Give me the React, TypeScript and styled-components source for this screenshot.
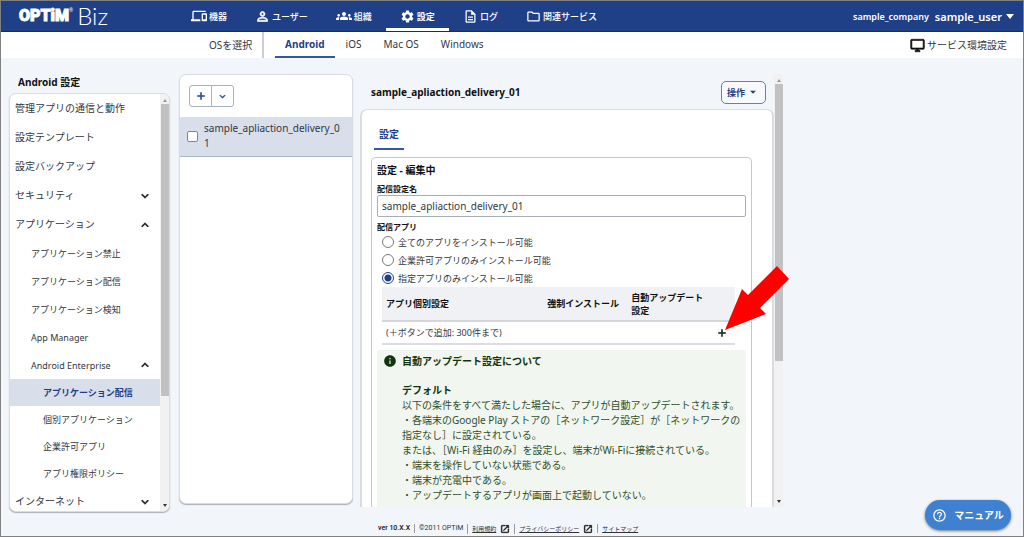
import React from "react";
import styled, { createGlobalStyle, css } from "styled-components";
import {
  MdAdd,
  MdArrowDropDown,
  MdDevices,
  MdExpandLess,
  MdExpandMore,
  MdGroups,
  MdHelpOutline,
  MdInfo,
  MdOpenInNew,
  MdOutlineDescription,
  MdOutlineDesktopWindows,
  MdOutlineFolder,
  MdPersonOutline,
  MdSettings,
} from "react-icons/md";

const navy = "#1f3f87";
const selected = "#d8deea";
const line = "#c3c7d1";

const GlobalStyle = createGlobalStyle`
  * { box-sizing: border-box; }
  body { margin: 0; }
  body, button, input {
    font-family: "Noto Sans", "Noto Sans CJK JP", sans-serif;
    font-size: 10px;
    line-height: 15px;
    color: #33373f;
  }
  button { padding: 0; cursor: pointer; }
  a { color: inherit; text-decoration: none; }
  h1, h2, h3, p, ul, fieldset, legend { margin: 0; padding: 0; border: 0; }
  ul { list-style: none; }
  svg { display: block; flex: none; }
  path[fill="none"] { stroke: none; }
`;

const Page = styled.div`
  position: relative;
  display: flex;
  flex-direction: column;
  height: 100vh;
  min-height: 500px;
  border: 1px solid #808080;
  background: #f2f5f9;
`;

const Header = styled.header`
  display: flex;
  flex: none;
  height: 31px;
  padding: 0 9px 0 18px;
  background: ${navy};
  border-bottom: 1px solid #0d2c75;
  color: #fff;
`;

const Logo = styled.a`
  display: flex;
  align-items: center;
  width: 158px;
`;

const Brand = styled.span`
  font: 900 16px/30px Roboto, "Liberation Sans", sans-serif;
  -webkit-text-stroke: 1px #fff;
`;

const Mark = styled.sup`
  align-self: flex-start;
  font-size: 5px;
  line-height: 18px;
`;

const Product = styled.span`
  margin-left: 4px;
  font: 300 24px/30px Lato, sans-serif;
`;

const MainNav = styled.nav`
  display: flex;
  flex: 1;
`;

const NavLink = styled.a<{ $active?: boolean }>`
  display: flex;
  align-items: center;
  gap: 2px;
  padding: 3px 14px 0;
  border-bottom: 3px solid ${(p) => (p.$active ? "#fff" : "transparent")};
  font-size: 9px;
  font-weight: ${(p) => (p.$active ? 700 : 500)};
  white-space: nowrap;
`;

const Account = styled.button`
  display: flex;
  align-items: center;
  gap: 6px;
  border: 0;
  background: none;
  color: #fff;
  font-size: 9px;
  font-weight: 600;
`;

const UserName = styled.span`
  display: flex;
  align-items: center;
  gap: 4px;
  font-size: 11px;
`;

const SubNav = styled.nav`
  display: flex;
  flex: none;
  height: 26px;
  padding: 0 16px 0 208px;
  background: #fff;
`;

const OsLabel = styled.span`
  display: flex;
  align-items: center;
  width: 55px;
  margin-right: 11px;
  border-right: 2px solid #cbced6;
  white-space: nowrap;
`;

const OsTab = styled.a<{ $active?: boolean }>`
  display: flex;
  align-items: center;
  padding: 0 11px;
  border-bottom: 2px solid transparent;
  white-space: nowrap;
  ${(p) =>
    p.$active &&
    css`
      padding: 0 10px;
      border-color: #3557a0;
      color: ${navy};
      font-weight: 700;
    `}
`;

const Environment = styled.a`
  display: flex;
  align-items: center;
  gap: 2px;
  margin-left: auto;
  svg { color: #111; stroke-width: 1px; }
`;

const Workspace = styled.main`
  display: grid;
  grid-template-columns: 161px 176px minmax(0, 5fr) minmax(0, 3fr);
  flex: 1;
  min-height: 0;
  padding-left: 8px;
`;

const Sidebar = styled.aside`
  display: flex;
  flex-direction: column;
  min-height: 0;
  padding-top: 16px;
`;

const SidebarTitle = styled.h2`
  flex: none;
  height: 19px;
  padding-left: 9px;
  color: #111;
  font-size: 10px;
  line-height: 17px;
`;

const SidebarCard = styled.nav`
  display: flex;
  flex: 1;
  min-height: 0;
  overflow: hidden;
  margin-bottom: -5px;
  border: 1px solid #d8dce3;
  border-radius: 7px;
  background: #fff;
  box-shadow: 0 1px 1px #a9adb5;
`;

const MenuList = styled.ul`
  flex: 1;
  overflow: hidden;
`;

const MenuLink = styled.a<{ $level: number; $active?: boolean }>`
  display: flex;
  align-items: center;
  justify-content: space-between;
  height: ${(p) => [29, 28, 27][p.$level]}px;
  padding: 0 8px 0 ${(p) => [5, 21, 33][p.$level]}px;
  font-size: ${(p) => (p.$level === 0 ? 10 : 9)}px;
  white-space: nowrap;
  svg { color: #111; stroke-width: 1px; }
  ${(p) =>
    p.$active &&
    css`
      background: ${selected};
      color: ${navy};
      font-weight: 700;
    `}
`;

const Track = styled.div`
  display: flex;
  flex-direction: column;
  align-items: center;
  flex: none;
  width: 9px;
  background: #f1f1f1;
`;

const Thumb = styled.div<{ $size: string }>`
  width: 8px;
  height: ${(p) => p.$size};
  background: #c1c1c1;
`;

const ArrowEnd = styled.span<{ $down?: boolean }>`
  width: 0;
  margin: ${(p) => (p.$down ? "auto 0 4px" : "5px 0 2px")};
  border: 2px solid transparent;
  ${(p) =>
    p.$down
      ? "border-top: 3px solid #333; border-bottom: 0;"
      : "border-bottom: 3px solid #999; border-top: 0;"}
`;

const ListCard = styled.section`
  margin: 16px -7px 3px 9px;
  border: 1px solid #d8dce3;
  border-radius: 7px;
  background: #fff;
  box-shadow: 0 1px 1px #a9adb5;
`;

const Toolbar = styled.div`
  display: flex;
  height: 42px;
  padding: 10px 9px;
`;

const ToolButton = styled.button<{ $side: "left" | "right" }>`
  display: flex;
  align-items: center;
  justify-content: center;
  width: 23px;
  height: 22px;
  border: 1px solid #a9b0be;
  border-radius: ${(p) => (p.$side === "left" ? "3px 0 0 3px" : "0 3px 3px 0")};
  margin-left: ${(p) => (p.$side === "left" ? 0 : -1)}px;
  background: #fff;
  color: ${navy};
  svg { stroke-width: 1px; }
`;

const ListRow = styled.label`
  display: flex;
  align-items: center;
  gap: 6px;
  height: 40px;
  padding: 0 7px 1px;
  border-bottom: 1px solid #a9b7d0;
  background: ${selected};
  word-break: break-all;
`;

const CheckBox = styled.input`
  appearance: none;
  flex: none;
  width: 11px;
  height: 11px;
  margin: 0;
  border: 1px solid #858585;
  border-radius: 2px;
  background: #fff;
`;

const Detail = styled.section`
  position: relative;
  display: flex;
  min-width: 0;
  min-height: 0;
  margin: 16px -14px 0 14px;
`;

const DetailScroll = styled.div`
  display: flex;
  flex-direction: column;
  flex: 1;
  min-width: 0;
  overflow: hidden;
`;

const DetailHead = styled.div`
  display: flex;
  align-items: center;
  justify-content: space-between;
  flex: none;
  height: 35px;
  padding: 1px 8px 0 11px;
`;

const Title = styled.h1`
  color: #111;
  font-size: 10px;
  font-weight: 700;
`;

const ActionButton = styled.button`
  display: flex;
  align-items: center;
  justify-content: center;
  gap: 1px;
  width: 45px;
  height: 23px;
  border: 1px solid #6680b3;
  border-radius: 5px;
  background: #f7f9fc;
  color: ${navy};
  font-size: 9px;
  font-weight: 700;
`;

const DetailCard = styled.div`
  flex: none;
  padding: 15px 20px 0 9px;
  border: 1px solid #d8dce3;
  border-width: 1px 2px 0;
  border-radius: 7px 7px 0 0;
  background: #fff;
`;

const PanelTab = styled.button`
  display: block;
  width: 30px;
  height: 25px;
  margin: 0 0 7px 3px;
  padding-bottom: 5px;
  border: 0;
  border-bottom: 2px solid #3557a0;
  background: none;
  color: ${navy};
  font-weight: 700;
`;

const EditCard = styled.form`
  padding: 5px 5px 0;
  border: 1px solid ${line};
  border-bottom: 0;
  border-radius: 5px 5px 0 0;
`;

const EditTitle = styled.h2`
  height: 20px;
  color: #111;
  font-size: 10px;
`;

const FieldLabel = styled.label`
  display: block;
  color: #111;
  font-size: 8px;
  font-weight: 700;
  line-height: 12px;
`;

const TextInput = styled.input`
  display: block;
  width: 100%;
  height: 22px;
  margin-bottom: 4px;
  padding: 0 4px;
  border: 1px solid #a9adb8;
  border-radius: 2px;
  background: #fff;
`;

const RadioRow = styled.label`
  display: flex;
  align-items: center;
  gap: 4px;
  height: 18px;
  padding-left: 5px;
  font-size: 9px;
`;

const Radio = styled.input`
  appearance: none;
  width: 12px;
  height: 12px;
  margin: 0;
  border: 1px solid #7b7b7b;
  border-radius: 50%;
  background: #fff;
  &:checked {
    border-color: ${navy};
    background: radial-gradient(circle, ${navy} 3px, #fff 4px);
  }
`;

const AppTable = styled.table`
  width: calc(100% - 16px);
  margin-left: 5px;
  border-collapse: collapse;
  table-layout: fixed;
  font-size: 9px;
  line-height: 13px;
  th {
    height: 34px;
    padding: 0 4px;
    border-bottom: 2px solid #d4d6dc;
    background: #eff1f4;
    color: #111;
    text-align: left;
  }
  td {
    height: 23px;
    padding: 0 4px;
    border-bottom: 2px solid #dcdde2;
  }
`;

const AddCell = styled.td`
  text-align: right;
`;

const AddButton = styled.button`
  display: inline-block;
  vertical-align: middle;
  border: 0;
  margin-right: 3px;
  background: none;
  color: #111;
  svg { stroke-width: 1px; }
`;

const Notice = styled.section`
  display: flex;
  gap: 5px;
  height: 200px;
  margin-top: 5px;
  padding: 4px 0 0 6px;
  border-radius: 3px 3px 0 0;
  background: #f1f6f0;
  color: #2f4f2c;
  white-space: nowrap;
  svg { color: #12350f; }
`;

const NoticeTitle = styled.h3`
  margin-bottom: 14px;
  color: #12350f;
  font-size: 10px;
`;

const NoticeHeading = styled.strong`
  color: #12350f;
`;

const Pointer = styled.svg`
  position: absolute;
  top: 192px;
  right: -6px;
  pointer-events: none;
`;

const Footer = styled.footer`
  display: flex;
  align-items: center;
  flex: none;
  height: 29px;
  padding: 14px 0 0 373px;
  color: #333;
  font-family: Roboto, "Noto Sans CJK JP", sans-serif;
  font-size: 7px;
  line-height: 9px;
`;

const FooterItem = styled.span<{ $strong?: boolean }>`
  display: flex;
  align-items: center;
  gap: 4px;
  padding: 0 4px;
  color: ${(p) => (p.$strong ? "#111" : "inherit")};
  font-weight: ${(p) => (p.$strong ? 500 : 400)};
  & + & { border-left: 1px solid #999da5; }
  a { font-size: 6px; text-decoration: underline; }
  svg { color: #111; stroke-width: 1px; }
`;

const ManualButton = styled.button`
  position: absolute;
  right: 12px;
  bottom: 6px;
  display: flex;
  align-items: center;
  justify-content: center;
  gap: 7px;
  width: 86px;
  height: 30px;
  border: 0;
  border-radius: 15px;
  background: #3f80d0;
  box-shadow: 0 1px 3px #6a7484;
  color: #fff;
  font-weight: 700;
`;

const navItems = [
  { label: "機器", icon: <MdDevices size={16} /> },
  { label: "ユーザー", icon: <MdPersonOutline size={15} strokeWidth={1} /> },
  { label: "組織", icon: <MdGroups size={16} /> },
  { label: "設定", icon: <MdSettings size={15} />, active: true },
  { label: "ログ", icon: <MdOutlineDescription size={15} /> },
  { label: "関連サービス", icon: <MdOutlineFolder size={15} /> },
];

const menu: { label: string; level: number; open?: boolean; active?: boolean }[] = [
  { label: "管理アプリの通信と動作", level: 0 },
  { label: "設定テンプレート", level: 0 },
  { label: "設定バックアップ", level: 0 },
  { label: "セキュリティ", level: 0, open: false },
  { label: "アプリケーション", level: 0, open: true },
  { label: "アプリケーション禁止", level: 1 },
  { label: "アプリケーション配信", level: 1 },
  { label: "アプリケーション検知", level: 1 },
  { label: "App Manager", level: 1 },
  { label: "Android Enterprise", level: 1, open: true },
  { label: "アプリケーション配信", level: 2, active: true },
  { label: "個別アプリケーション", level: 2 },
  { label: "企業許可アプリ", level: 2 },
  { label: "アプリ権限ポリシー", level: 2 },
  { label: "インターネット", level: 0, open: false },
];

const installModes = [
  "全てのアプリをインストール可能",
  "企業許可アプリのみインストール可能",
  "指定アプリのみインストール可能",
];

const conditions = [
  "以下の条件をすべて満たした場合に、アプリが自動アップデートされます。",
  "・各端末のGoogle Play ストアの［ネットワーク設定］が［ネットワークの",
  "指定なし］に設定されている。",
  "または、［Wi-Fi 経由のみ］を設定し、端末がWi-Fiに接続されている。",
  "・端末を操作していない状態である。",
  "・端末が充電中である。",
  "・アップデートするアプリが画面上で起動していない。",
];

function ScrollTrack({ size }: { size: string }) {
  return (
    <Track aria-hidden="true">
      <ArrowEnd />
      <Thumb $size={size} />
      <ArrowEnd $down />
    </Track>
  );
}

export default function App() {
  return (
    <Page>
      <GlobalStyle />
      <Header>
        <Logo href="#">
          <Brand>OPTiM</Brand>
          <Mark>®</Mark>
          <Product>Biz</Product>
        </Logo>
        <MainNav>
          {navItems.map((item) => (
            <NavLink key={item.label} href="#" $active={item.active}>
              {item.icon}
              {item.label}
            </NavLink>
          ))}
        </MainNav>
        <Account>
          sample_company
          <UserName>
            sample_user
            <svg width="8" height="5" viewBox="0 0 8 5">
              <path d="M0 0h8L4 5z" fill="currentColor" />
            </svg>
          </UserName>
        </Account>
      </Header>
      <SubNav>
        <OsLabel>OSを選択</OsLabel>
        <OsTab href="#" $active>Android</OsTab>
        <OsTab href="#">iOS</OsTab>
        <OsTab href="#">Mac OS</OsTab>
        <OsTab href="#">Windows</OsTab>
        <Environment href="#">
          <MdOutlineDesktopWindows size={15} />
          サービス環境設定
        </Environment>
      </SubNav>
      <Workspace>
        <Sidebar>
          <SidebarTitle>Android 設定</SidebarTitle>
          <SidebarCard>
            <MenuList>
              {menu.map((item, i) => (
                <li key={i}>
                  <MenuLink href="#" $level={item.level} $active={item.active}>
                    {item.label}
                    {item.open === true && <MdExpandLess size={14} />}
                    {item.open === false && <MdExpandMore size={14} />}
                  </MenuLink>
                </li>
              ))}
            </MenuList>
            <ScrollTrack size="70%" />
          </SidebarCard>
        </Sidebar>
        <ListCard>
          <Toolbar>
            <ToolButton $side="left" aria-label="追加"><MdAdd size={12} /></ToolButton>
            <ToolButton $side="right" aria-label="メニュー"><MdExpandMore size={11} /></ToolButton>
          </Toolbar>
          <ListRow>
            <CheckBox type="checkbox" />
            <span>sample_apliaction_delivery_01</span>
          </ListRow>
        </ListCard>
        <Detail>
          <DetailScroll>
            <DetailHead>
              <Title>sample_apliaction_delivery_01</Title>
              <ActionButton>
                操作
                <MdArrowDropDown size={14} />
              </ActionButton>
            </DetailHead>
            <DetailCard>
              <PanelTab>設定</PanelTab>
              <EditCard>
                <EditTitle>設定 - 編集中</EditTitle>
                <FieldLabel htmlFor="name">配信設定名</FieldLabel>
                <TextInput id="name" defaultValue="sample_apliaction_delivery_01" />
                <fieldset>
                  <FieldLabel as="legend">配信アプリ</FieldLabel>
                  {installModes.map((mode, i) => (
                    <RadioRow key={mode}>
                      <Radio type="radio" name="mode" defaultChecked={i === 2} />
                      {mode}
                    </RadioRow>
                  ))}
                </fieldset>
                <AppTable>
                  <colgroup>
                    <col />
                    <col width="84" />
                    <col width="82" />
                    <col width="26" />
                  </colgroup>
                  <thead>
                    <tr>
                      <th>アプリ個別設定</th>
                      <th>強制インストール</th>
                      <th>自動アップデート設定</th>
                      <th />
                    </tr>
                  </thead>
                  <tbody>
                    <tr>
                      <td colSpan={3}>(＋ボタンで追加: 300件まで)</td>
                      <AddCell>
                        <AddButton type="button" aria-label="追加"><MdAdd size={12} /></AddButton>
                      </AddCell>
                    </tr>
                  </tbody>
                </AppTable>
                <Notice>
                  <MdInfo size={14} />
                  <div>
                    <NoticeTitle>自動アップデート設定について</NoticeTitle>
                    <NoticeHeading>デフォルト</NoticeHeading>
                    {conditions.map((text) => (
                      <p key={text}>{text}</p>
                    ))}
                  </div>
                </Notice>
              </EditCard>
            </DetailCard>
          </DetailScroll>
          <ScrollTrack size="64%" />
          <Pointer width="64" height="65" viewBox="0 0 64 65">
            <path d="M0 64L17 23L23 29L52 0L64 13L35 42L41 48Z" fill="#f00" />
          </Pointer>
        </Detail>
      </Workspace>
      <Footer>
        <FooterItem $strong>ver 10.X.X</FooterItem>
        <FooterItem>©2011 OPTiM</FooterItem>
        <FooterItem><a href="#">利用規約</a><MdOpenInNew size={10} /></FooterItem>
        <FooterItem><a href="#">プライバシーポリシー</a><MdOpenInNew size={10} /></FooterItem>
        <FooterItem><a href="#">サイトマップ</a></FooterItem>
      </Footer>
      <ManualButton>
        <MdHelpOutline size={15} />
        マニュアル
      </ManualButton>
    </Page>
  );
}
